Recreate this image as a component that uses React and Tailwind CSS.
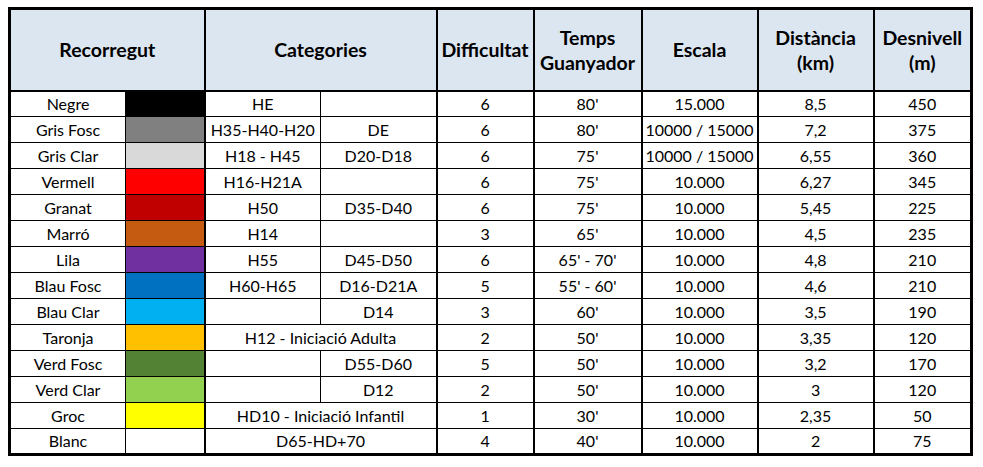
const rows = [
  { name: 'Negre', color: 'bg-[#000000]', c1: 'HE', c2: '', d: '6', t: "80'", e: '15.000', km: '8,5', m: '450' },
  { name: 'Gris Fosc', color: 'bg-[#808080]', c1: 'H35-H40-H20', c2: 'DE', d: '6', t: "80'", e: '10000 / 15000', km: '7,2', m: '375' },
  { name: 'Gris Clar', color: 'bg-[#d9d9d9]', c1: 'H18 - H45', c2: 'D20-D18', d: '6', t: "75'", e: '10000 / 15000', km: '6,55', m: '360' },
  { name: 'Vermell', color: 'bg-[#ff0000]', c1: 'H16-H21A', c2: '', d: '6', t: "75'", e: '10.000', km: '6,27', m: '345' },
  { name: 'Granat', color: 'bg-[#c00000]', c1: 'H50', c2: 'D35-D40', d: '6', t: "75'", e: '10.000', km: '5,45', m: '225' },
  { name: 'Marró', color: 'bg-[#c55a11]', c1: 'H14', c2: '', d: '3', t: "65'", e: '10.000', km: '4,5', m: '235' },
  { name: 'Lila', color: 'bg-[#7030a0]', c1: 'H55', c2: 'D45-D50', d: '6', t: "65' - 70'", e: '10.000', km: '4,8', m: '210' },
  { name: 'Blau Fosc', color: 'bg-[#0070c0]', c1: 'H60-H65', c2: 'D16-D21A', d: '5', t: "55' - 60'", e: '10.000', km: '4,6', m: '210' },
  { name: 'Blau Clar', color: 'bg-[#00b0f0]', c1: '', c2: 'D14', d: '3', t: "60'", e: '10.000', km: '3,5', m: '190' },
  { name: 'Taronja', color: 'bg-[#ffc000]', span: 'H12 - Iniciació Adulta', d: '2', t: "50'", e: '10.000', km: '3,35', m: '120' },
  { name: 'Verd Fosc', color: 'bg-[#548235]', c1: '', c2: 'D55-D60', d: '5', t: "50'", e: '10.000', km: '3,2', m: '170' },
  { name: 'Verd Clar', color: 'bg-[#92d050]', c1: '', c2: 'D12', d: '2', t: "50'", e: '10.000', km: '3', m: '120' },
  { name: 'Groc', color: 'bg-[#ffff00]', span: 'HD10 - Iniciació Infantil', d: '1', t: "30'", e: '10.000', km: '2,35', m: '50' },
  { name: 'Blanc', color: 'bg-white', span: 'D65-HD+70', d: '4', t: "40'", e: '10.000', km: '2', m: '75' },
];

const th = 'border-2 border-black bg-[#dce6f1] font-bold text-[19.5px] leading-[25px] text-center align-middle p-0';
const td = 'border-y border-black text-center align-middle p-0 h-[26px] leading-[20px]';

export default function App() {
  return (
    <div className="min-h-screen bg-white pl-[8px] pt-[7px] font-['Lato','Liberation_Sans',sans-serif] text-black">
      <table className="table-fixed border-collapse border-[3px] border-black w-[962px] text-[16px]">
        <colgroup>
          <col className="w-[116px]" />
          <col className="w-[79px]" />
          <col className="w-[116px]" />
          <col className="w-[116px]" />
          <col className="w-[97px]" />
          <col className="w-[108px]" />
          <col className="w-[116px]" />
          <col className="w-[116px]" />
          <col className="w-[98px]" />
        </colgroup>
        <thead>
          <tr className="h-[82px]">
            <th colSpan={2} className={th}>Recorregut</th>
            <th colSpan={2} className={th}>Categories</th>
            <th className={th}>Difficultat</th>
            <th className={th}>Temps<br />Guanyador</th>
            <th className={th}>Escala</th>
            <th className={th}>Distància<br />(km)</th>
            <th className={th}>Desnivell<br />(m)</th>
          </tr>
        </thead>
        <tbody>
          {rows.map((r) => (
            <tr key={r.name}>
              <td className={`${td} border-l-2 border-r`}>{r.name}</td>
              <td className={`${td} border-r-2 ${r.color}`}></td>
              {r.span ? (
                <td colSpan={2} className={`${td} border-r-2`}>{r.span}</td>
              ) : (
                <>
                  <td className={`${td} border-r`}>{r.c1}</td>
                  <td className={`${td} border-r-2`}>{r.c2}</td>
                </>
              )}
              <td className={`${td} border-r-2`}>{r.d}</td>
              <td className={`${td} border-r-2`}>{r.t}</td>
              <td className={`${td} border-r-2`}>{r.e}</td>
              <td className={`${td} border-r-2`}>{r.km}</td>
              <td className={`${td} border-r-2`}>{r.m}</td>
            </tr>
          ))}
        </tbody>
      </table>
    </div>
  );
}
